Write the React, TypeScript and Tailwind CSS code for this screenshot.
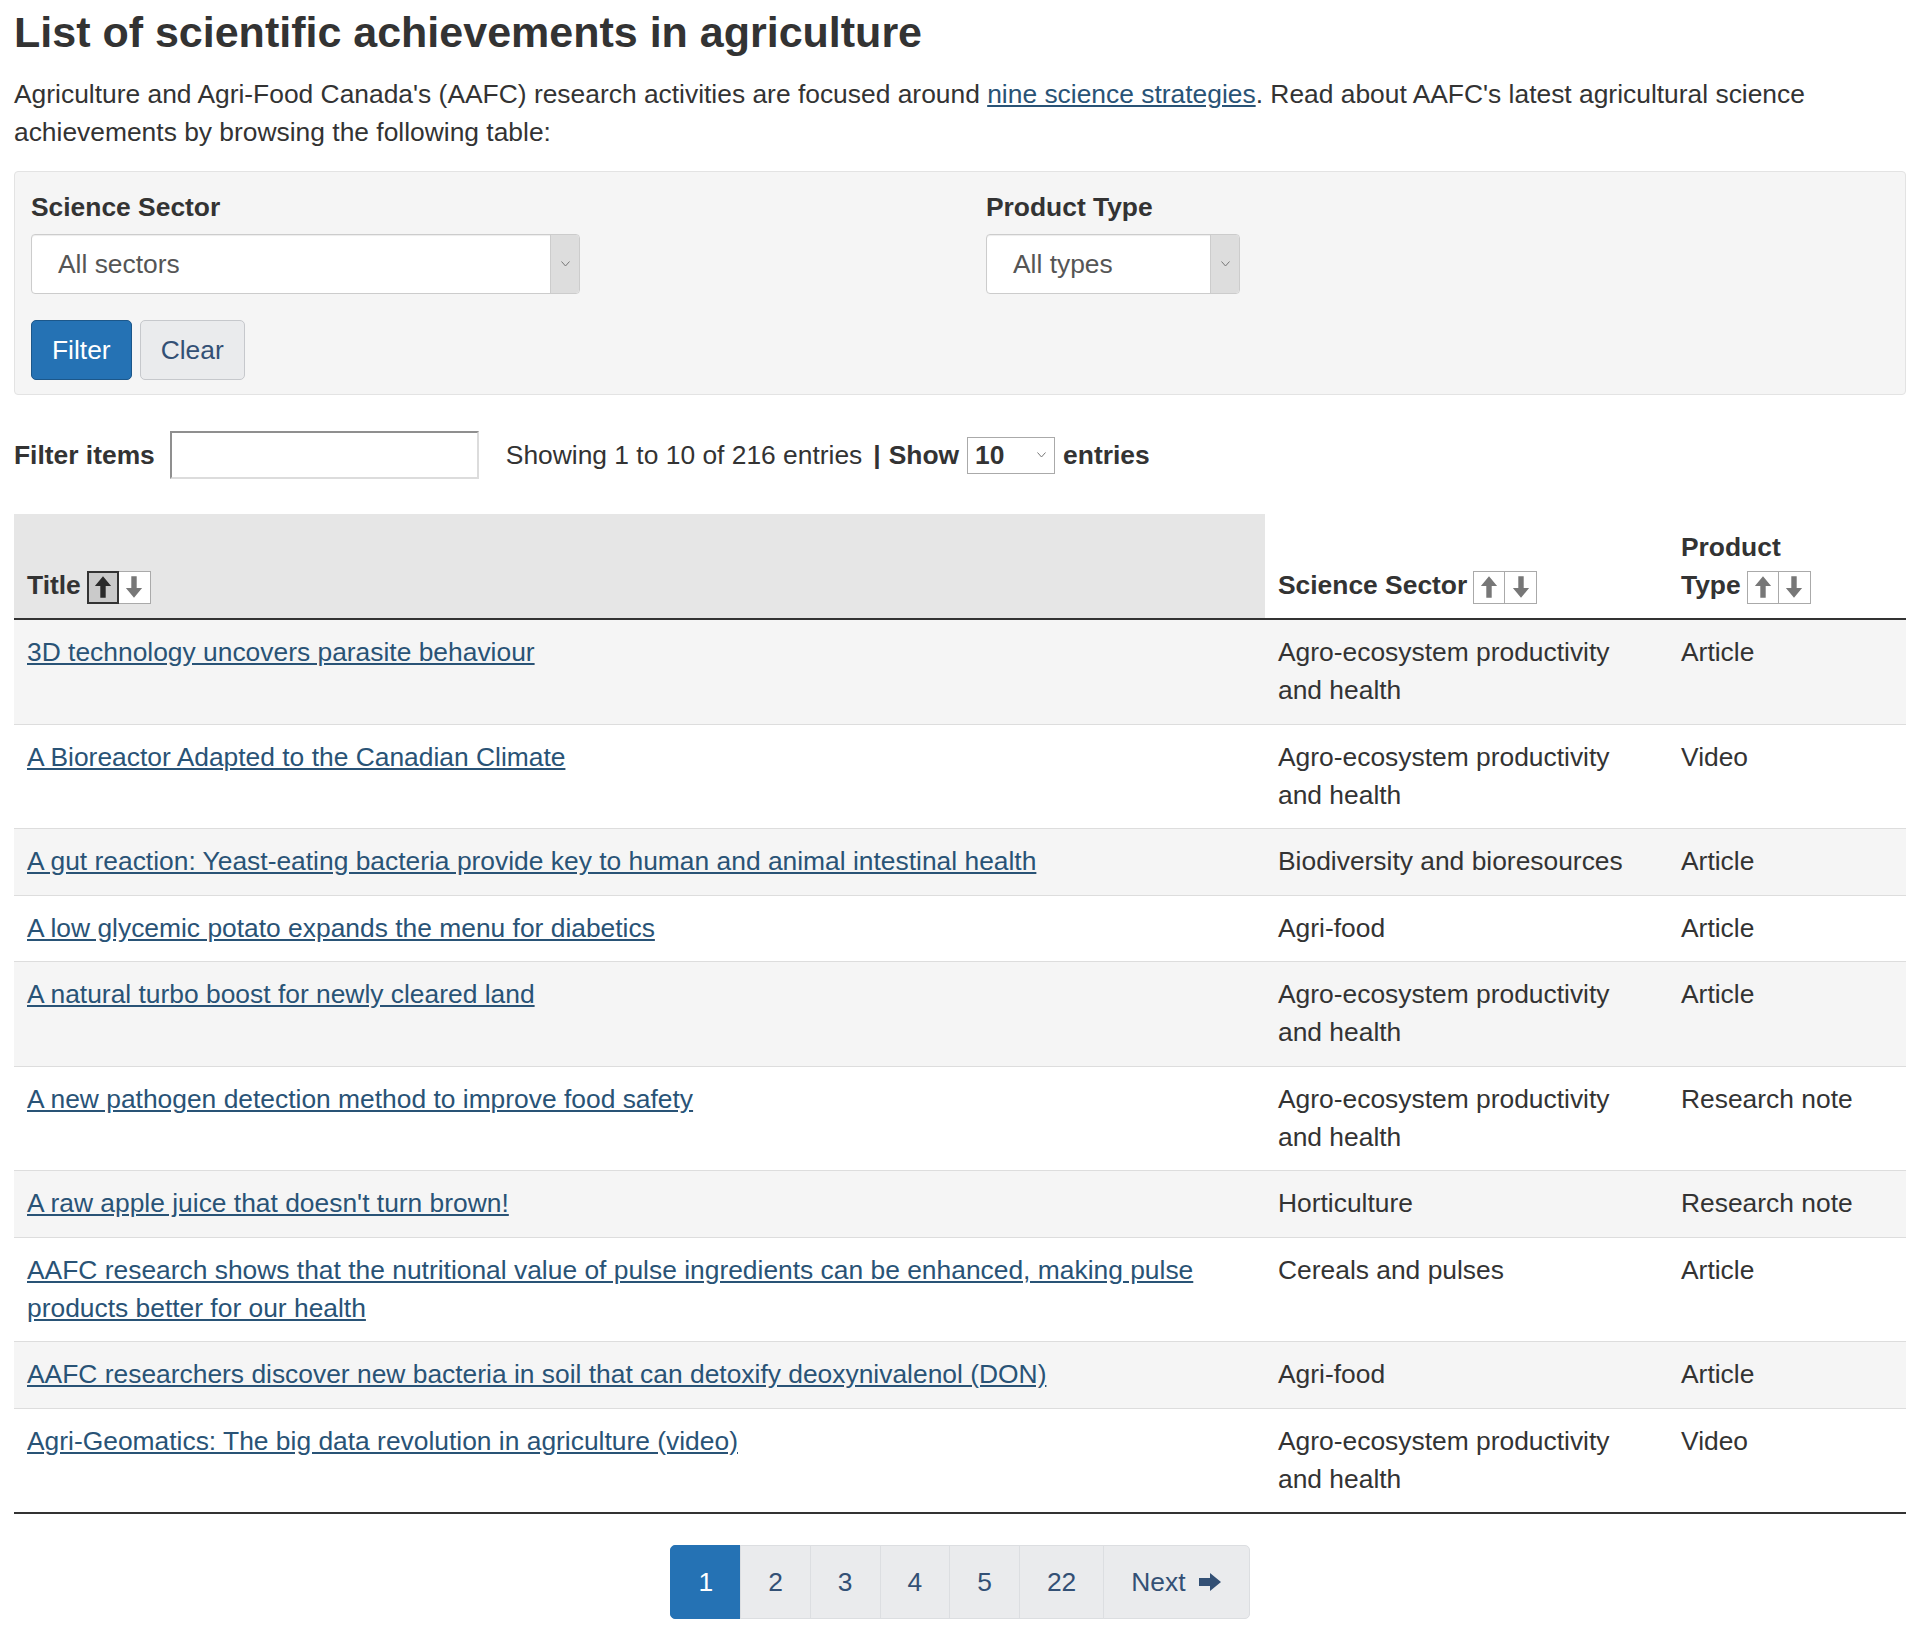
const rows = [
  { title: "3D technology uncovers parasite behaviour", sector: "Agro-ecosystem productivity and health", type: "Article" },
  { title: "A Bioreactor Adapted to the Canadian Climate", sector: "Agro-ecosystem productivity and health", type: "Video" },
  { title: "A gut reaction: Yeast-eating bacteria provide key to human and animal intestinal health", sector: "Biodiversity and bioresources", type: "Article" },
  { title: "A low glycemic potato expands the menu for diabetics", sector: "Agri-food", type: "Article" },
  { title: "A natural turbo boost for newly cleared land", sector: "Agro-ecosystem productivity and health", type: "Article" },
  { title: "A new pathogen detection method to improve food safety", sector: "Agro-ecosystem productivity and health", type: "Research note" },
  { title: "A raw apple juice that doesn't turn brown!", sector: "Horticulture", type: "Research note" },
  {
    title: "AAFC research shows that the nutritional value of pulse ingredients can be enhanced, making pulse products better for our health",
    sector: "Cereals and pulses",
    type: "Article",
  },
  { title: "AAFC researchers discover new bacteria in soil that can detoxify deoxynivalenol (DON)", sector: "Agri-food", type: "Article" },
  { title: "Agri-Geomatics: The big data revolution in agriculture (video)", sector: "Agro-ecosystem productivity and health", type: "Video" },
];

function Arrow({ down, color }: { down?: boolean; color: string }) {
  return (
    <svg width="18" height="24" viewBox="0 0 20 26" className={down ? "rotate-180" : ""}>
      <polygon points="10,1 19,12 13,12 13,25 7,25 7,12 1,12" fill={color} />
    </svg>
  );
}

function SortButtons({ active }: { active?: boolean }) {
  return (
    <span className="ml-[6px] inline-flex align-middle">
      <span
        className={
          active
            ? "flex h-[33px] w-[32px] items-center justify-center border-2 border-[#333] bg-[#cacaca]"
            : "flex h-[33px] w-[32px] items-center justify-center border border-[#aaa] bg-white"
        }
      >
        <Arrow color={active ? "#2a2a2a" : "#777"} />
      </span>
      <span className="flex h-[33px] w-[32px] items-center justify-center border border-l-0 border-[#aaa] bg-white">
        <Arrow down color="#777" />
      </span>
    </span>
  );
}

function Chevron() {
  return (
    <svg width="9" height="6" viewBox="0 0 9 6">
      <polyline points="0.5,0.5 4.5,5 8.5,0.5" fill="none" stroke="#777" strokeWidth="1" />
    </svg>
  );
}

function Select({ label, width }: { label: string; width: string }) {
  return (
    <div
      className={`${width} flex h-[60px] overflow-hidden rounded-[4px] border border-[#ccc] bg-white shadow-[inset_0_1px_1px_rgba(0,0,0,0.075)]`}
    >
      <div className="flex flex-1 items-center pl-[26px] text-[#555]">{label}</div>
      <div className="flex w-[29px] items-center justify-center border-l border-[#ccc] bg-[#dddddd]">
        <Chevron />
      </div>
    </div>
  );
}

export default function App() {
  return (
    <main
      className="min-h-screen bg-white px-[14px] pb-[20px] text-[26.4px] leading-[38px] text-[#333]"
      style={{ fontFamily: '"Liberation Sans", Arial, Helvetica, sans-serif' }}
    >
      <h1 className="mt-[9px] mb-[19px] text-[43px] font-bold leading-[47px] text-[#333]">
        List of scientific achievements in agriculture
      </h1>
      <p className="mb-[20px]">
        Agriculture and Agri-Food Canada's (AAFC) research activities are focused around{" "}
        <a href="#" className="text-[#295376] underline">
          nine science strategies
        </a>
        . Read about AAFC's latest agricultural science achievements by browsing the following table:
      </p>

      <section className="rounded-[4px] border border-[#e3e3e3] bg-[#f5f5f5] px-[16px] pt-[16px] pb-[14px]">
        <div className="grid grid-cols-[955px_1fr]">
          <div>
            <div className="font-bold">Science Sector</div>
            <div className="mt-[8px]">
              <Select label="All sectors" width="w-[549px]" />
            </div>
          </div>
          <div>
            <div className="font-bold">Product Type</div>
            <div className="mt-[8px]">
              <Select label="All types" width="w-[254px]" />
            </div>
          </div>
        </div>
        <div className="mt-[26px] flex gap-[8px]">
          <button className="h-[60px] rounded-[5px] border border-[#1c578a] bg-[#2572b4] px-[20px] text-white">
            Filter
          </button>
          <button className="h-[60px] rounded-[5px] border border-[#c6c8cc] bg-[#eaebed] px-[20px] text-[#335075]">
            Clear
          </button>
        </div>
      </section>

      <div className="mt-[36px] flex items-center">
        <span className="font-bold">Filter items</span>
        <input
          className="ml-[15px] h-[48px] w-[309px] border-2 border-t-[#8f8f8f] border-l-[#8f8f8f] border-r-[#dcdcdc] border-b-[#dcdcdc] bg-white"
          type="text"
        />
        <span className="ml-[27px]">Showing 1 to 10 of 216 entries</span>
        <span className="ml-[11px] font-bold">|</span>
        <span className="ml-[8px] font-bold">Show</span>
        <div className="ml-[8px] flex h-[37px] w-[88px] items-center justify-between border border-[#aaa] bg-white pr-[8px] pl-[7px] font-bold">
          <span>10</span>
          <Chevron />
        </div>
        <span className="ml-[8px] font-bold">entries</span>
      </div>

      <table className="mt-[35px] w-full table-fixed border-collapse">
        <colgroup>
          <col className="w-[1251px]" />
          <col className="w-[403px]" />
          <col className="w-[238px]" />
        </colgroup>
        <thead>
          <tr className="border-b-2 border-[#333]">
            <th className="bg-[#e6e6e6] px-[13px] pt-[14px] pb-[14px] text-left align-bottom font-bold">
              Title
              <SortButtons active />
            </th>
            <th className="px-[13px] pt-[14px] pb-[14px] text-left align-bottom font-bold">
              Science Sector
              <SortButtons />
            </th>
            <th className="px-[13px] pt-[14px] pb-[14px] text-left align-bottom font-bold">
              Product{" "}
              <span className="whitespace-nowrap">
                Type
                <SortButtons />
              </span>
            </th>
          </tr>
        </thead>
        <tbody>
          {rows.map((r, i) => (
            <tr
              key={r.title}
              className={`${i % 2 === 0 ? "bg-[#f5f5f5]" : "bg-white"} ${
                i === rows.length - 1 ? "border-b-2 border-b-[#333]" : ""
              } border-t border-t-[#dddddd]`}
            >
              <td className="px-[13px] pt-[13px] pb-[14.5px] align-top">
                <a href="#" className="text-[#295376] underline">
                  {r.title}
                </a>
              </td>
              <td className="px-[13px] pt-[13px] pb-[14.5px] align-top">{r.sector}</td>
              <td className="px-[13px] pt-[13px] pb-[14.5px] align-top">{r.type}</td>
            </tr>
          ))}
        </tbody>
      </table>

      <nav className="mt-[31px] flex justify-center">
        <ul className="flex">
          <li className="rounded-l-[5px] border border-[#2572b4] bg-[#2572b4] px-[27px] py-[17px] text-white">1</li>
          {["2", "3", "4", "5", "22"].map((p) => (
            <li key={p} className="-ml-px border border-[#dcdee1] bg-[#eaebed] px-[27px] py-[17px] text-[#335075]">
              {p}
            </li>
          ))}
          <li className="-ml-px flex items-center gap-[12px] rounded-r-[5px] border border-[#dcdee1] bg-[#eaebed] px-[27px] py-[17px] text-[#335075]">
            Next
            <svg width="24" height="20" viewBox="0 0 24 20">
              <polygon points="23,10 12,1 12,6 1,6 1,14 12,14 12,19" fill="#335075" />
            </svg>
          </li>
        </ul>
      </nav>
    </main>
  );
}
